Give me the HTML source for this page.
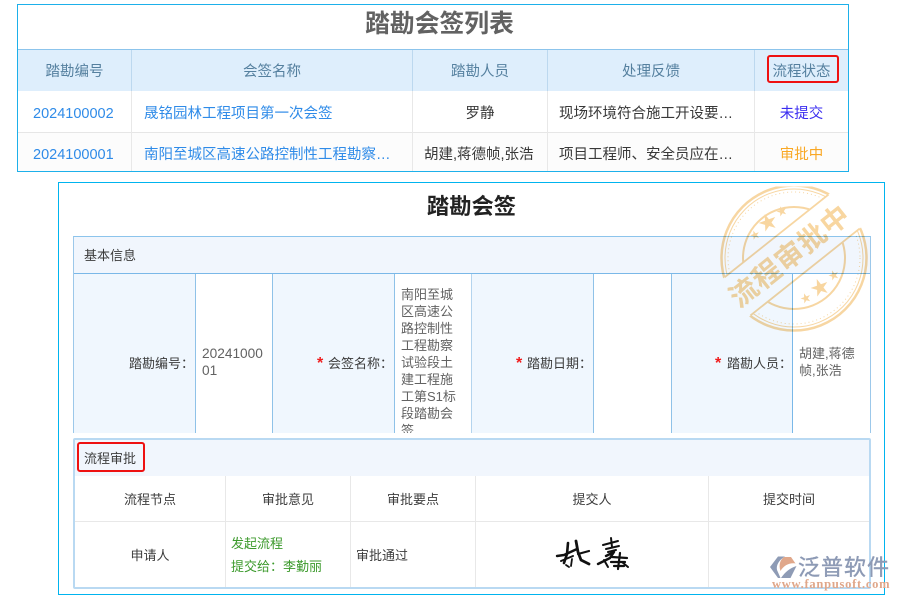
<!DOCTYPE html>
<html lang="zh-CN">
<head>
<meta charset="utf-8">
<title>踏勘会签</title>
<style>
html,body{margin:0;padding:0;background:#fff;}
body{position:relative;width:900px;height:600px;overflow:hidden;font-family:"Liberation Sans","Noto Sans CJK SC",sans-serif;}
#w{position:absolute;left:0;top:0;width:900px;height:600px;background:#fff;filter:blur(.3px);}
.a{position:absolute;box-sizing:border-box;}
.t{position:absolute;white-space:nowrap;line-height:20px;height:20px;margin-top:1px;}
.c{text-align:center;}
.h{font-size:14.5px;color:#55809f;text-align:center;}
.b{font-size:14.5px;color:#383838;}
.l{color:#2f8be8;}
.s{font-size:13px;color:#3c3c3c;}
.v{font-size:13px;color:#626262;line-height:17px;height:17px;}
.r{position:absolute;color:#f01c1c;font-size:16px;font-weight:bold;line-height:20px;}
.vl{position:absolute;width:1px;}
.hl{position:absolute;height:1px;}
</style>
</head>
<body>
<div id="w">
<!-- top list -->
<div class="a" style="left:17px;top:4px;width:832px;height:168px;border:1px solid #1db0ea;background:#fff;"></div>
<div class="t c" style="left:31px;top:7px;width:817px;height:32px;line-height:32px;font-size:24.8px;font-weight:bold;color:#626262;margin-top:1.500px;">踏勘会签列表</div>
<div class="a" style="left:18px;top:49px;width:830px;height:42px;background:#deeefc;border-top:1px solid #8cc4ec;"></div>
<div class="a" style="left:18px;top:133px;width:830px;height:38px;background:#fcfcfc;"></div>
<div class="hl" style="left:18px;top:132px;width:830px;background:#e6e6e6;"></div>
<div class="vl" style="left:131px;top:50px;height:41px;background:#bcd8ef;"></div>
<div class="vl" style="left:412px;top:50px;height:41px;background:#bcd8ef;"></div>
<div class="vl" style="left:547px;top:50px;height:41px;background:#bcd8ef;"></div>
<div class="vl" style="left:754px;top:50px;height:41px;background:#bcd8ef;"></div>
<div class="vl" style="left:131px;top:91px;height:80px;background:#e8e8e8;"></div>
<div class="vl" style="left:412px;top:91px;height:80px;background:#e8e8e8;"></div>
<div class="vl" style="left:547px;top:91px;height:80px;background:#e8e8e8;"></div>
<div class="vl" style="left:754px;top:91px;height:80px;background:#e8e8e8;"></div>

<div class="t h" style="left:18px;top:61px;width:113px;">踏勘编号</div>
<div class="t h" style="left:132px;top:61px;width:280px;">会签名称</div>
<div class="t h" style="left:413px;top:61px;width:134px;">踏勘人员</div>
<div class="t h" style="left:548px;top:61px;width:206px;">处理反馈</div>
<div class="t h" style="left:755px;top:61px;width:93px;">流程状态</div>
<div class="a" style="left:767px;top:55px;width:72px;height:28px;border:2px solid #ee1111;border-radius:3px;"></div>

<div class="t b l" style="left:33px;top:103px;">2024100002</div>
<div class="t b l" style="left:144px;top:103px;">晟铭园林工程项目第一次会签</div>
<div class="t b c" style="left:413px;top:103px;width:134px;">罗静</div>
<div class="t b" style="left:559px;top:103px;">现场环境符合施工开设要…</div>
<div class="t b c" style="left:755px;top:103px;width:93px;color:#3a2cf0;">未提交</div>

<div class="t b l" style="left:33px;top:144px;">2024100001</div>
<div class="t b l" style="left:144px;top:144px;">南阳至城区高速公路控制性工程勘察…</div>
<div class="t b" style="left:424px;top:144px;">胡建,蒋德帧,张浩</div>
<div class="t b" style="left:559px;top:144px;">项目工程师、安全员应在…</div>
<div class="t b c" style="left:755px;top:144px;width:93px;color:#f9a825;">审批中</div>

<!-- lower form -->
<div class="a" style="left:58px;top:182px;width:827px;height:413px;border:1px solid #00b4ef;background:#fff;"></div>
<div class="t c" style="left:59px;top:191px;width:825px;height:30px;line-height:30px;font-size:22.300px;font-weight:bold;color:#222;">踏勘会签</div>

<!-- basic info table -->
<div class="a" style="left:73px;top:236px;width:798px;height:197px;background:#fff;border-left:1px solid #9cc8ea;border-right:1px solid #9cc8ea;border-top:1px solid #8cc4ec;"></div>
<div class="a" style="left:74px;top:237px;width:796px;height:37px;background:#f1f6fd;border-bottom:1px solid #7ab8e8;"></div>
<div class="a" style="left:74px;top:274px;width:121px;height:159px;background:#f0f7fe;"></div>
<div class="a" style="left:273px;top:274px;width:121px;height:159px;background:#f0f7fe;"></div>
<div class="a" style="left:472px;top:274px;width:121px;height:159px;background:#f0f7fe;"></div>
<div class="a" style="left:671px;top:274px;width:121px;height:159px;background:#f0f7fe;"></div>
<div class="vl" style="left:195px;top:274px;height:159px;background:#8fc2e8;"></div>
<div class="vl" style="left:272px;top:274px;height:159px;background:#8fc2e8;"></div>
<div class="vl" style="left:394px;top:274px;height:159px;background:#8fc2e8;"></div>
<div class="vl" style="left:471px;top:274px;height:159px;background:#b4d4ee;"></div>
<div class="vl" style="left:593px;top:274px;height:159px;background:#8fc2e8;"></div>
<div class="vl" style="left:671px;top:274px;height:159px;background:#8fc2e8;"></div>
<div class="vl" style="left:792px;top:274px;height:159px;background:#7ab8e8;"></div>

<div class="t s" style="left:84px;top:245px;">基本信息</div>
<div class="t s" style="left:129px;top:353px;">踏勘编号：</div>
<div class="r" style="left:317px;top:354px;">*</div>
<div class="t s" style="left:328px;top:353px;">会签名称：</div>
<div class="r" style="left:516px;top:354px;">*</div>
<div class="t s" style="left:527px;top:353px;">踏勘日期：</div>
<div class="r" style="left:715px;top:354px;">*</div>
<div class="t s" style="left:727px;top:353px;">踏勘人员：</div>

<div class="t v" style="left:202px;top:344px;font-size:13.700px;">20241000</div>
<div class="t v" style="left:202px;top:361px;font-size:13.700px;">01</div>

<div class="a" style="left:395px;top:274px;width:76px;height:159px;overflow:hidden;">
  <div class="t v" style="left:6px;top:11px;">南阳至城</div>
  <div class="t v" style="left:6px;top:28px;">区高速公</div>
  <div class="t v" style="left:6px;top:45px;">路控制性</div>
  <div class="t v" style="left:6px;top:62px;">工程勘察</div>
  <div class="t v" style="left:6px;top:79px;">试验段土</div>
  <div class="t v" style="left:6px;top:96px;">建工程施</div>
  <div class="t v" style="left:6px;top:113px;">工第S1标</div>
  <div class="t v" style="left:6px;top:130px;">段踏勘会</div>
  <div class="t v" style="left:6px;top:147px;">签</div>
</div>
<div class="t v" style="left:799px;top:344px;">胡建,蒋德</div>
<div class="t v" style="left:799px;top:361px;">帧,张浩</div>

<!-- approval panel -->
<div class="a" style="left:73px;top:438px;width:798px;height:151px;border:2px solid #b9d9f2;border-radius:2px;background:#fff;"></div>
<div class="a" style="left:75px;top:440px;width:794px;height:36px;background:#f1f6fd;"></div>
<div class="hl" style="left:75px;top:521px;width:794px;background:#e8e8e8;"></div>
<div class="vl" style="left:225px;top:476px;height:111px;background:#e8e8e8;"></div>
<div class="vl" style="left:350px;top:476px;height:111px;background:#e8e8e8;"></div>
<div class="vl" style="left:475px;top:476px;height:111px;background:#e8e8e8;"></div>
<div class="vl" style="left:708px;top:476px;height:111px;background:#e8e8e8;"></div>

<div class="t s" style="left:84px;top:448px;">流程审批</div>
<div class="a" style="left:77px;top:442px;width:68px;height:30px;border:2px solid #ee1111;border-radius:3px;"></div>

<div class="t s c" style="left:75px;top:489px;width:150px;">流程节点</div>
<div class="t s c" style="left:226px;top:489px;width:124px;">审批意见</div>
<div class="t s c" style="left:351px;top:489px;width:124px;">审批要点</div>
<div class="t s c" style="left:476px;top:489px;width:232px;">提交人</div>
<div class="t s c" style="left:709px;top:489px;width:160px;">提交时间</div>
<div class="t s c" style="left:75px;top:545px;width:150px;">申请人</div>
<div class="t s" style="left:231px;top:533px;color:#3c9a2c;">发起流程</div>
<div class="t s" style="left:231px;top:556px;color:#3c9a2c;">提交给：李勤丽</div>
<div class="t s" style="left:356px;top:545px;">审批通过</div>

<!-- signature -->
<svg class="a" style="left:540px;top:530px;" width="100" height="50" viewBox="0 0 100 50" fill="none" stroke="#111" stroke-linecap="round" stroke-linejoin="round">
  <path d="M17 26 L24 25 L37 19" stroke-width="2.400"/>
  <path d="M28 13 L27 24 L24 33" stroke-width="2.600"/>
  <path d="M21 31 L33 26" stroke-width="2"/>
  <path d="M36 11 L38 22 L41 30 L49 34" stroke-width="2.800"/>
  <path d="M38 24 L49 21" stroke-width="2.200"/>
  <path d="M32 29 L31 36 M26 35 L29 37" stroke-width="1.800"/>
  <path d="M63 15 L78 11 M71 8 L72 17 M66 19 L79 16 M68 22 L76 20" stroke-width="2"/>
  <path d="M66 26 L74 22 L70 28 L58 34" stroke-width="2.400"/>
  <path d="M72 27 L87 28 M80 23 L78 39 M71 32 L85 32 M74 36 L84 36" stroke-width="2.200"/>
  <path d="M64 30 L68 37 M82 32 L88 37" stroke-width="2"/>
</svg>

<!-- stamp -->
<svg class="a" style="left:0;top:0;mix-blend-mode:multiply;" width="900" height="600" viewBox="0 0 900 600">
  <defs>
    <clipPath id="cl"><rect x="700" y="186.500" width="171" height="160"/></clipPath>
    <clipPath id="ci"><circle cx="794" cy="258" r="72"/></clipPath>
    <mask id="m" maskUnits="userSpaceOnUse" x="700" y="170" width="200" height="180">
      <rect x="700" y="170" width="200" height="180" fill="#fff"/>
      <rect x="672" y="230" width="240" height="46" fill="#000" transform="rotate(-38.500 792 253)"/>
    </mask>
  </defs>
  <g clip-path="url(#cl)">
    <g mask="url(#m)" fill="none" stroke="#f7d6a2">
      <circle cx="794" cy="258" r="72.500" stroke-width="2.500"/>
      <circle cx="794" cy="258" r="69" stroke-width="1"/>
      <circle cx="794" cy="258" r="66" stroke-width="1" stroke-dasharray="1 3"/>
      <circle cx="794" cy="258" r="51" stroke-width="2"/>
    </g>
    <g clip-path="url(#ci)" stroke="#f7d6a2" stroke-width="1.800">
      <line x1="672" y1="230" x2="912" y2="230" transform="rotate(-38.500 792 253)"/>
      <line x1="672" y1="276" x2="912" y2="276" transform="rotate(-38.500 792 253)"/>
    </g>
    <text x="0" y="0" transform="translate(790 256) rotate(-38.500)" text-anchor="middle" dominant-baseline="central" font-family="'Liberation Sans','Noto Sans CJK SC',sans-serif" font-weight="bold" font-size="28" letter-spacing="1" fill="#f8d6a0">流程审批中</text>
    <g fill="#f8d6a0" font-family="'DejaVu Sans',sans-serif" text-anchor="middle" dominant-baseline="central">
      <text x="768" y="223" font-size="23" transform="rotate(-20 768 223)">★</text>
      <text x="782" y="212" font-size="13" transform="rotate(-20 782 212)">★</text>
      <text x="755" y="235" font-size="12" transform="rotate(-20 755 235)">★</text>
      <text x="820" y="288" font-size="23" transform="rotate(-20 820 288)">★</text>
      <text x="806" y="299" font-size="13" transform="rotate(-20 806 299)">★</text>
      <text x="834" y="276" font-size="13" transform="rotate(-20 834 276)">★</text>
    </g>
  </g>
</svg>

<!-- fanpu watermark -->
<svg class="a" style="left:765px;top:552px;" width="36" height="30" viewBox="765 552 36 30">
  <path d="M778 556.500 L785 556.500 C779 560 776 565 777 570 L780.500 578 L778 578 L770 567 Z" fill="#8e9bb5"/>
  <path d="M784 557 L791 557 L795.500 563.500 C790 562.500 784 565 780.500 571 C778.500 565 780 560 784 557 Z" fill="#e0a78a"/>
  <path d="M781 578 C785 572 790 568 796.500 566 L790.500 578 Z" fill="#8e9bb5"/>
</svg>
<div class="t" style="left:798px;top:553px;height:28px;line-height:28px;font-size:22px;letter-spacing:1px;color:#8d9ab5;-webkit-text-stroke:.4px #8d9ab5;">泛普软件</div>
<div class="t" style="left:772px;top:575px;height:16px;line-height:16px;font-family:'Liberation Serif',serif;font-weight:bold;font-size:12.500px;letter-spacing:.75px;color:#e0a78a;">www.fanpusoft.com</div>
</div>
</body>
</html>
